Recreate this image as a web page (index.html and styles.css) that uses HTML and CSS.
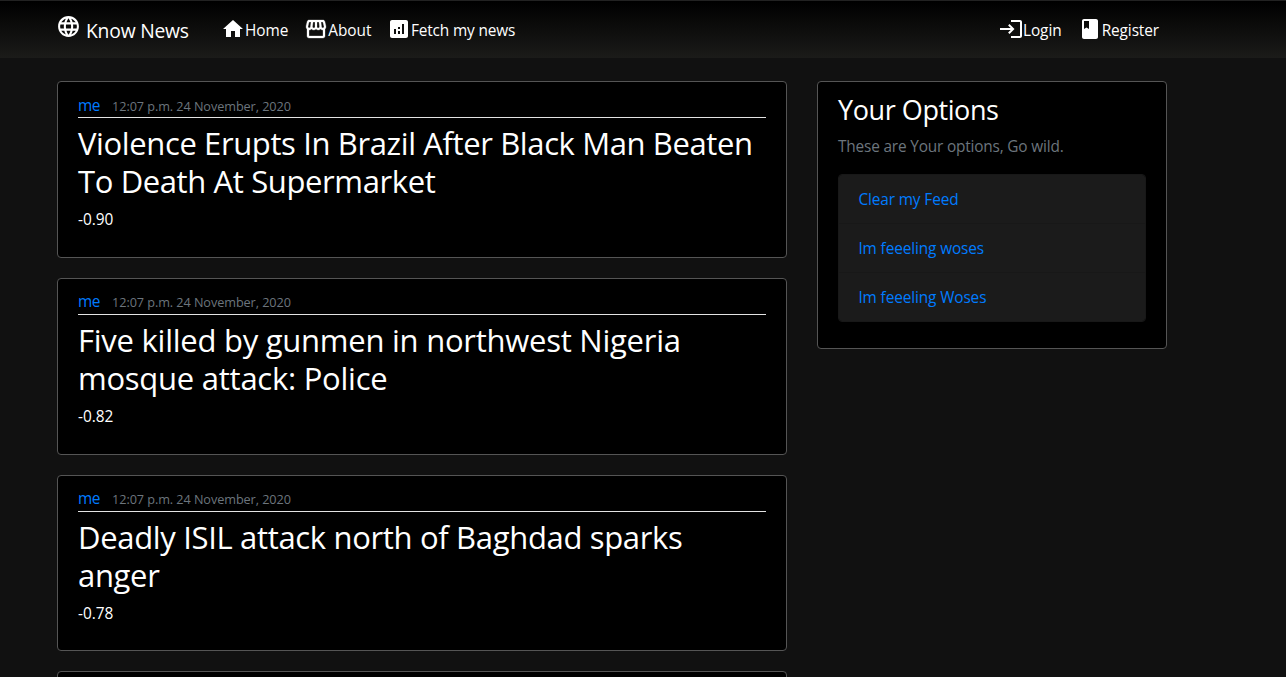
FILE: index.html
```
<!DOCTYPE html>
<html lang="en">
<head>
<meta charset="utf-8">
<title>Know News</title>
<link rel="stylesheet" href="styles.css">
</head>
<body>
<nav class="navbar">
  <div class="container nav-inner">
    <a class="brand"><svg class="icon globe" viewBox="0 0 24 24"><path d="M11.99 2C6.47 2 2 6.48 2 12s4.47 10 9.99 10C17.52 22 22 17.52 22 12S17.52 2 11.99 2zm6.93 6h-2.95c-.32-1.25-.78-2.45-1.38-3.56 1.84.63 3.37 1.91 4.33 3.56zM12 4.04c.83 1.2 1.48 2.53 1.91 3.96h-3.82c.43-1.43 1.08-2.76 1.91-3.96zM4.26 14C4.1 13.36 4 12.69 4 12s.1-1.36.26-2h3.38c-.08.66-.14 1.32-.14 2s.06 1.34.14 2H4.26zm.82 2h2.95c.32 1.25.78 2.45 1.38 3.56-1.84-.63-3.37-1.9-4.33-3.56zm2.95-8H5.08c.96-1.66 2.49-2.93 4.33-3.56C8.81 5.55 8.35 6.75 8.03 8zM12 19.96c-.83-1.2-1.48-2.53-1.91-3.96h3.82c-.43 1.43-1.08 2.76-1.91 3.96zM14.34 14H9.66c-.09-.66-.16-1.32-.16-2s.07-1.35.16-2h4.68c.09.65.16 1.32.16 2s-.07 1.34-.16 2zm.25 5.56c.6-1.11 1.06-2.31 1.38-3.56h2.95c-.96 1.65-2.49 2.93-4.33 3.56zM16.36 14c.08-.66.14-1.32.14-2s-.06-1.34-.14-2h3.38c.16.64.26 1.31.26 2s-.1 1.36-.26 2h-3.38z"/></svg><span class="brand-name">Know News</span></a>
    <div class="links">
      <a class="link"><svg class="icon" viewBox="0 0 24 24"><path d="M10 20v-6h4v6h5v-8h3L12 3 2 12h3v8z"/></svg><span>Home</span></a>
      <a class="link"><svg class="icon store" viewBox="0 0 24 24"><path d="M21.9 8.89l-1.05-4.37c-.22-.9-1-1.52-1.91-1.52H5.05c-.9 0-1.69.63-1.9 1.52L2.1 8.89c-.24 1.02-.02 2.06.62 2.88.08.11.19.19.28.29V19c0 1.1.9 2 2 2h14c1.1 0 2-.9 2-2v-6.94c.09-.09.2-.18.28-.28.64-.82.87-1.87.62-2.89zM18.91 4.99l1.05 4.37c.1.42.01.84-.25 1.17-.14.18-.44.47-.94.47-.61 0-1.14-.49-1.21-1.14L16.98 5l1.93-.01zM13 5h1.96l.54 4.52c.05.39-.07.78-.33 1.07-.22.26-.54.41-.95.41-.67 0-1.22-.59-1.22-1.31V5zM8.49 9.52L9.04 5H11v4.69c0 .72-.55 1.31-1.29 1.31-.34 0-.65-.15-.89-.41-.25-.29-.37-.68-.33-1.07zm-4.45-.16L5.05 5h1.97l-.58 4.86c-.08.65-.6 1.14-1.21 1.14-.49 0-.8-.29-.93-.47-.27-.32-.36-.75-.26-1.17zM5 19v-6.03c.08.01.15.03.23.03.87 0 1.66-.36 2.24-.95.6.6 1.4.95 2.31.95.87 0 1.65-.36 2.23-.93.59.57 1.39.93 2.29.93.84 0 1.64-.35 2.24-.95.58.59 1.37.95 2.24.95.08 0 .15-.02.23-.03V19H5z"/></svg><span>About</span></a>
      <a class="link fetch"><svg class="icon" viewBox="0 0 24 24"><path d="M19 3H5c-1.1 0-2 .9-2 2v14c0 1.1.9 2 2 2h14c1.1 0 2-.9 2-2V5c0-1.1-.9-2-2-2zM9 17H7v-5h2v5zm4 0h-2v-3h2v3zm0-5h-2v-2h2v2zm4 5h-2V7h2v10z"/></svg><span>Fetch my news</span></a>
    </div>
    <div class="links account">
      <a class="link login"><svg class="icon" viewBox="0 0 24 24"><path d="M10.5 7 9.1 8.4 11.7 11H1v2h10.7l-2.6 2.6 1.4 1.4 5-5zM21 19h-9v2h9c1.1 0 2-.9 2-2V5c0-1.1-.9-2-2-2h-9v2h9z"/></svg><span>Login</span></a>
      <a class="link register"><svg class="icon" viewBox="0 0 24 24"><path d="M18 2H6c-1.1 0-2 .9-2 2v16c0 1.1.9 2 2 2h12c1.1 0 2-.9 2-2V4c0-1.1-.9-2-2-2zM6 4h5v8l-2.5-1.5L6 12V4z"/></svg><span>Register</span></a>
    </div>
  </div>
</nav>
<main class="container page">
  <section class="feed">
    <article class="card">
      <div class="meta"><a class="author">me</a><small class="date">12:07 p.m. 24 November, 2020</small></div>
      <h2 class="title title-tight">Violence Erupts In Brazil After Black Man Beaten To Death At Supermarket</h2>
      <p class="score">-0.90</p>
    </article>
    <article class="card">
      <div class="meta"><a class="author">me</a><small class="date">12:07 p.m. 24 November, 2020</small></div>
      <h2 class="title">Five killed by gunmen in northwest Nigeria mosque attack: Police</h2>
      <p class="score">-0.82</p>
    </article>
    <article class="card">
      <div class="meta"><a class="author">me</a><small class="date">12:07 p.m. 24 November, 2020</small></div>
      <h2 class="title title-snug">Deadly ISIL attack north of Baghdad sparks anger</h2>
      <p class="score">-0.78</p>
    </article>
    <article class="card"></article>
  </section>
  <aside class="options">
    <h3 class="options-title">Your Options</h3>
    <p class="hint">These are Your options, Go wild.</p>
    <ul class="list">
      <li class="item">Clear my Feed</li>
      <li class="item">Im feeeling woses</li>
      <li class="item">Im feeeling Woses</li>
    </ul>
  </aside>
</main>
</body>
</html>
```
FILE: styles.css
```
* { box-sizing: border-box; }
body { margin: 0; background: #111; color: #fff; font: 15.4px/24px "Open Sans", sans-serif; letter-spacing: -0.12px; }
.container { width: 1110px; margin-left: 57px; }
.navbar { height: 58px; border-top: 1px solid #222; background: linear-gradient(#000, #1b1b19); }
.nav-inner { display: flex; align-items: center; height: 57px; }
.brand, .link { display: flex; align-items: center; white-space: nowrap; }
.brand { width: 132px; gap: 5px; font-size: 19.3px; letter-spacing: -0.2px; }
.brand-name { padding-top: 2px; }
.icon { flex: none; width: 24px; height: 24px; fill: #fff; }
.globe { width: 25px; height: 25px; margin: -7px 0 0 -1px; }
.store { stroke: #fff; stroke-width: 0.3px; }
.links { display: flex; gap: 16px; margin-left: 32px; letter-spacing: -0.05px; }
.link { padding-top: 2px; }
.link .icon { margin-top: -3px; }
.fetch { margin-left: -0.5px; letter-spacing: -0.14px; }
.account { margin-left: auto; margin-right: 8px; }
.register { letter-spacing: -0.1px; }
.page { display: flex; gap: 30px; height: 619px; padding-top: 23px; align-items: flex-start; overflow: hidden; }
.feed { width: 730px; }
.card { height: 176.8px; margin-bottom: 20px; padding: 11px 20px; border: 1px solid #555; border-radius: 4px; background: #000; }
.meta { display: flex; gap: 12px; height: 25px; border-bottom: 1px solid #e3e3e3; }
.author { padding-top: 0.6px; color: #007bff; letter-spacing: -0.4px; }
.date { padding-top: 0.6px; font-size: 12.7px; letter-spacing: -0.08px; color: #6c757d; }
.title { margin: 6px 0 7.4px; font-size: 31px; line-height: 38.4px; font-weight: 400; letter-spacing: -0.25px; }
.title-snug { letter-spacing: -0.33px; }
.title-tight { letter-spacing: -0.38px; }
.score { margin: 0; letter-spacing: 0; }
.options { width: 350px; height: 268px; padding: 11px 20px; border: 1px solid #555; border-radius: 4px; background: #000; }
.options-title { margin: 0 0 8px; font-size: 27px; line-height: 33.6px; font-weight: 400; letter-spacing: -0.42px; }
.hint { margin: 0 0 15.4px; color: #6c757d; letter-spacing: -0.18px; }
.list { margin: 0; padding: 0; list-style: none; border: 1px solid #181818; border-radius: 4px; overflow: hidden; }
.item { height: 49px; padding: 13px 19.4px 11px; color: #007bff; background: #1b1b1b; border-bottom: 1px solid #181818; }
.item:last-child { height: 48px; border-bottom: 0; }
```
